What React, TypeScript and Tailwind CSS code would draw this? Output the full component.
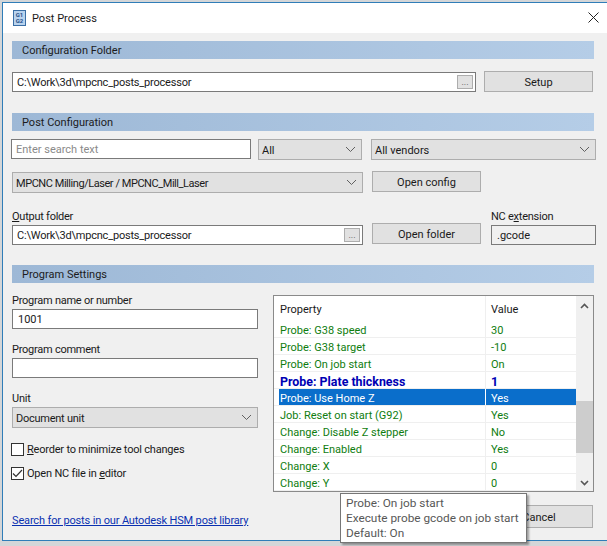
import React from 'react';

const rows = [
  { name: 'Probe: G38 speed', value: '30' },
  { name: 'Probe: G38 target', value: '-10' },
  { name: 'Probe: On job start', value: 'On' },
  { name: 'Probe: Plate thickness', value: '1', modified: true },
  { name: 'Probe: Use Home Z', value: 'Yes', selected: true },
  { name: 'Job: Reset on start (G92)', value: 'Yes' },
  { name: 'Change: Disable Z stepper', value: 'No' },
  { name: 'Change: Enabled', value: 'Yes' },
  { name: 'Change: X', value: '0' },
  { name: 'Change: Y', value: '0' },
];

const Chevron = () => (
  <svg width="11" height="7" viewBox="0 0 11 7" className="shrink-0">
    <polyline points="1,1 5.5,5.5 10,1" fill="none" stroke="#606060" strokeWidth="1" />
  </svg>
);

const SectionBar = ({ title }: { title: string }) => (
  <div className="h-[18px] w-[582px] bg-gradient-to-r from-[#9db8d6] to-[#b5cde7] pl-[10px] leading-[20px] text-[#1c1c1c]">
    {title}
  </div>
);

const Button = ({ label, className }: { label: string; className: string }) => (
  <div className={`flex h-[21px] items-center justify-center border border-[#adadad] bg-[#e1e1e1] text-[#1a1a1a] ${className}`}>
    <span className="pt-[4px]">{label}</span>
  </div>
);

const Select = ({ label, className }: { label: string; className: string }) => (
  <div className={`flex h-[21px] items-center justify-between border border-[#adadad] bg-[#e1e1e1] pl-[3px] pr-[5px] text-[#1a1a1a] ${className}`}>
    <span className="pt-[4px]">{label}</span>
    <Chevron />
  </div>
);

const TextBox = ({ value, className, browse }: { value?: string; className: string; browse?: boolean }) => (
  <div className={`flex h-[20px] items-center justify-between border border-[#7a7a7a] bg-white pl-[4px] pr-[2px] text-[#1a1a1a] ${className}`}>
    <span className="pt-[2px]">{value}</span>
    {browse && (
      <span className="flex h-[14px] w-[16px] items-end justify-center border border-[#adadad] bg-[#e1e1e1] text-[9px] leading-[11px] tracking-normal text-[#555]">
        ...
      </span>
    )}
  </div>
);

const Label = ({ children }: { children: React.ReactNode }) => (
  <div className="h-[17px] leading-[17px] tracking-[-0.25px] text-[#1a1a1a]">{children}</div>
);

const Checkbox = ({ checked, children }: { checked?: boolean; children: React.ReactNode }) => (
  <div className="-ml-[1px] flex h-[13px] items-center gap-[3px] tracking-[-0.2px] text-[#1a1a1a]">
    <span className="flex h-[13px] w-[13px] items-center justify-center border border-[#333] bg-white">
      {checked && (
        <svg width="11" height="9" viewBox="0 0 11 9">
          <polyline points="1,4.5 4,7.5 10,1" fill="none" stroke="#333" strokeWidth="1.2" />
        </svg>
      )}
    </span>
    <span className="pt-[2px]">{children}</span>
  </div>
);

const PropertyRow = ({ name, value, modified, selected }: (typeof rows)[number] & { modified?: boolean; selected?: boolean }) => {
  const tone = selected
    ? 'text-white'
    : modified
      ? 'text-[12.4px] font-bold text-[#0000b4]'
      : 'text-[#0f7d0f]';
  return (
    <div className="flex h-[17px] border-b border-[#efefef] leading-[19px]">
      <div className={`ml-[5px] w-[206px] pl-[1px] ${selected ? 'bg-[#0a6ecb]' : ''} ${tone}`}>{name}</div>
      <div className={`w-[91px] border-l border-[#efefef] pl-[5px] ${selected ? 'border-white bg-[#0a6ecb]' : ''} ${tone}`}>{value}</div>
    </div>
  );
};

export default function App() {
  return (
    <div className="relative h-[546px] w-[607px] overflow-hidden bg-[#d4d6d8] pl-[2px] pt-[2px] font-['Roboto','Noto_Sans',sans-serif] text-[11px]">
      <div className="w-[605px] border-b border-l border-t border-[#2f7db8]">
        <div className="flex h-[30px] items-center bg-white pl-[10px]">
          <div className="flex h-[16px] w-[13px] flex-col items-center justify-center border border-[#3a6ea5] bg-[#b9d3ee] text-[6px] font-bold leading-[6px] text-[#1f4f8a]">
            <span>G1</span>
            <span>G2</span>
          </div>
          <span className="ml-[6px] flex-1 pt-[2px] text-[#1a1a1a]">Post Process</span>
          <svg width="11" height="11" viewBox="0 0 11 11" className="mb-[2px] mr-[8px]">
            <path d="M0.5 0.5 L10.5 10.5 M10.5 0.5 L0.5 10.5" stroke="#222" strokeWidth="1" />
          </svg>
        </div>

        <div className="h-[507px] bg-[#f0f0f0] pl-[9px] pt-[8px]">
          <SectionBar title="Configuration Folder" />
          <div className="mt-[12px] flex items-end">
            <TextBox value="C:\Work\3d\mpcnc_posts_processor" browse className="w-[464px] tracking-[-0.2px]" />
            <Button label="Setup" className="ml-[8px] w-[109px]" />
          </div>

          <div className="mt-[21px]">
            <SectionBar title="Post Configuration" />
          </div>
          <div className="mt-[8px] flex items-start">
            <div className="-ml-[1px] flex h-[20px] w-[240px] items-center border border-[#7a7a7a] bg-white pl-[4px] text-[#8a8a8a]">
              <span className="pt-[2px]">Enter search text</span>
            </div>
            <Select label="All" className="ml-[7px] w-[104px]" />
            <Select label="All vendors" className="ml-[9px] w-[225px]" />
          </div>
          <div className="mt-[12px] flex items-end">
            <Select label="MPCNC Milling/Laser / MPCNC_Mill_Laser" className="w-[351px] tracking-[-0.45px]" />
            <Button label="Open config" className="ml-[9px] w-[109px] -translate-y-[1px]" />
          </div>

          <div className="mt-[14px] flex">
            <div className="w-[360px] pt-[1px]">
              <Label><u>O</u>utput folder</Label>
              <TextBox value="C:\Work\3d\mpcnc_posts_processor" browse className="w-[351px] tracking-[-0.2px]" />
            </div>
            <div className="w-[119px] pt-[16px]">
              <Button label="Open folder" className="w-[109px]" />
            </div>
            <div className="pt-[1px]">
              <Label>NC e<u>x</u>tension</Label>
              <div className="flex h-[20px] w-[105px] items-center border border-[#7a7a7a] bg-[#f0f0f0] pl-[5px] text-[#1a1a1a]">
                <span className="pt-[2px]">.gcode</span>
              </div>
            </div>
          </div>

          <div className="mt-[20px]">
            <SectionBar title="Program Settings" />
          </div>

          <div className="mt-[9px] flex">
            <div className="w-[261px]">
              <Label>Program name or number</Label>
              <TextBox value="1001" className="w-[246px] pl-[5px]" />
              <div className="mt-[12px]">
                <Label>Program comment</Label>
                <TextBox className="w-[246px]" />
              </div>
              <div className="mt-[12px]">
                <Label>Unit</Label>
                <Select label="Document unit" className="w-[246px] pl-[3px] tracking-[-0.25px]" />
              </div>
              <div className="mt-[15px] flex flex-col gap-[11px]">
                <Checkbox><u>R</u>eorder to minimize tool changes</Checkbox>
                <Checkbox checked>Open NC file in <u>e</u>ditor</Checkbox>
              </div>
              <div className="mt-[33px] leading-[16px] tracking-[-0.15px] text-[#0a30b0] underline">
                Search for posts in our Autodesk HSM post library
              </div>
            </div>

            <div>
              <div className="mt-[3px] flex h-[197px] w-[321px] border border-[#8a8a8a] bg-white">
                <div className="w-[302px]">
                  <div className="flex h-[25px] items-center text-[#1a1a1a]">
                    <div className="h-full w-[211px] pl-[6px] leading-[28px]">Property</div>
                    <div className="h-full w-[91px] border-l border-[#efefef] pl-[5px] leading-[28px]">Value</div>
                  </div>
                  {rows.map((row) => (
                    <PropertyRow key={row.name} {...row} />
                  ))}
                </div>
                <div className="flex w-[17px] flex-col items-center bg-[#f0f0f0] pb-[5px] pt-[7px]">
                  <svg width="9" height="6" viewBox="0 0 9 6">
                    <polyline points="1,5 4.5,1.5 8,5" fill="none" stroke="#555" strokeWidth="1.6" />
                  </svg>
                  <div className="mb-auto mt-[92px] h-[52px] w-full bg-[#cdcdcd]" />
                  <svg width="9" height="6" viewBox="0 0 9 6">
                    <polyline points="1,1 4.5,4.5 8,1" fill="none" stroke="#555" strokeWidth="1.6" />
                  </svg>
                </div>
              </div>
              <div className="mt-[13px] flex w-[320px] justify-end">
                <Button label="Cancel" className="h-[23px] w-[108px]" />
              </div>
            </div>
          </div>
        </div>
      </div>

      <div className="absolute left-[340px] top-[493px] h-[50px] w-[187px] border border-[#767676] bg-white pl-[5px] pt-[2px] text-[11.8px] leading-[15px] text-[#575757] shadow-[2px_2px_2px_rgba(0,0,0,0.35)]">
        <div>Probe: On job start</div>
        <div>Execute probe gcode on job start</div>
        <div>Default: On</div>
      </div>
    </div>
  );
}
